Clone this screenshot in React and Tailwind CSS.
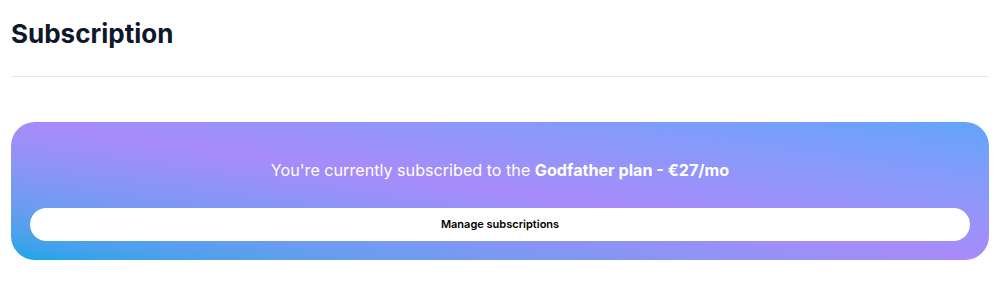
export default function App() {
  return (
    <div className="min-h-screen bg-white px-[11px] pt-[18px] font-['Inter',sans-serif]">
      <h1 className="text-[26px] leading-8 font-bold text-[#0f172a]">Subscription</h1>
      <div className="mt-[26px] border-t border-[#e2e8f0]" />
      <div className="mt-[45px] rounded-[24px] bg-gradient-to-tr from-[#0ea5e9] via-[#a78bfa] to-[#60a5fa] px-[19px] pb-[19px] pt-9">
        <p className="text-center text-[16.15px] leading-6 text-white">
          You're currently subscribed to the{" "}
          <span className="font-bold">Godfather plan - €27/mo</span>
        </p>
        <button className="mt-[26px] flex h-[33px] w-full items-center justify-center rounded-full bg-white text-[11px] font-semibold text-black">
          Manage subscriptions
        </button>
      </div>
    </div>
  );
}
